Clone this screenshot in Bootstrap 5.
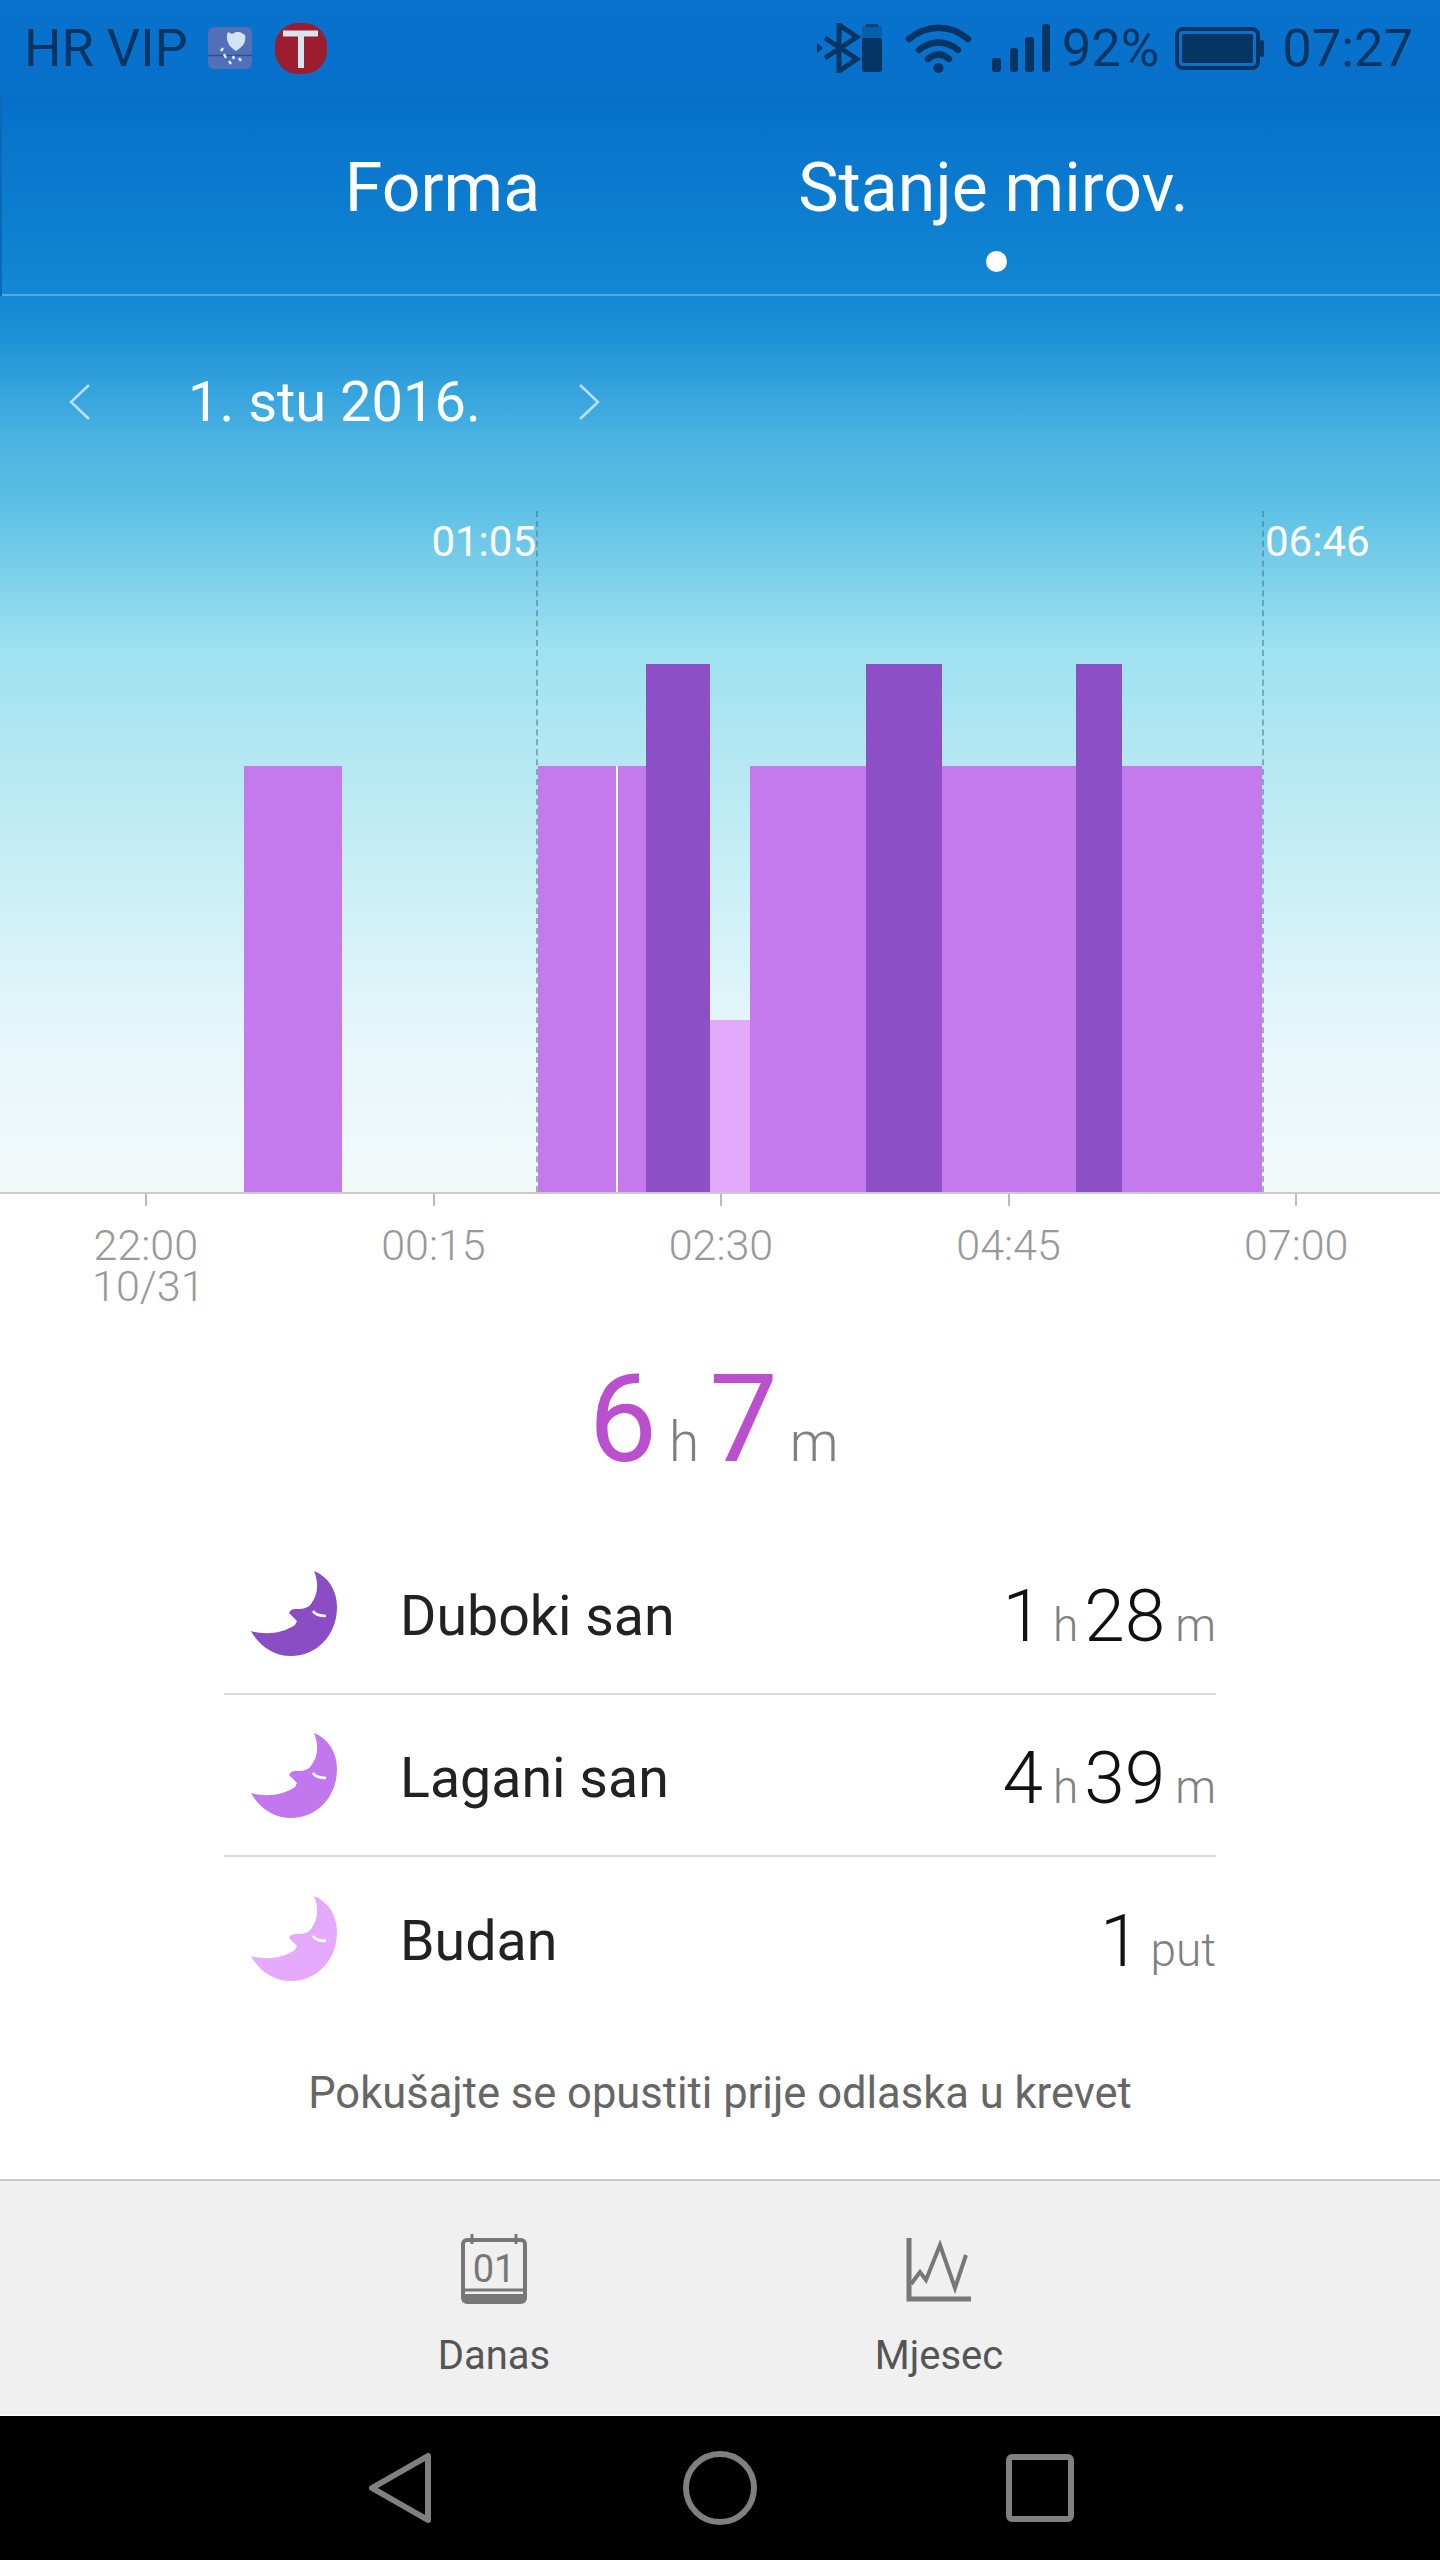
<!DOCTYPE html>
<html lang="hr">
<head>
  <meta charset="UTF-8">
  <meta name="viewport" content="width=device-width, initial-scale=1.0">
  <title>Stanje mirovanja</title>
  <link href="https://cdn.jsdelivr.net/npm/bootstrap@5.3.0/dist/css/bootstrap.min.css" rel="stylesheet">
  <style>
    body { background: #fff; font-family: Roboto, "Liberation Sans", sans-serif; }
    .phone { width: 1440px; height: 2560px; overflow: hidden; }

    /* plavi gornji dio */
    .sky {
      height: 1194px;
      border-bottom: 2px solid #c8cccc;
      background: linear-gradient(180deg, #0972cd 0, #0670c9 100px, #1287d4 290px, #1f93d7 340px, #4bb3e2 440px, #5cc0e4 505px, #9fe2f0 650px, #b8e9f3 780px, #cdf0f6 900px, #e8f7fb 1050px, #f2f9f9 1192px);
    }
    .status-row { height: 96px; padding: 0 27px 0 24px; color: #063564; font-size: 52.500px; line-height: 60px; }
    .tab-row { height: 200px; padding-right: 6px; border-bottom: 2px solid rgba(255,255,255,.28); margin-left: 2px; box-shadow: -2px 0 0 #0a69b8; }
    .tab-row .nav-link { width: 551px; padding: 53px 0 0; text-align: center; color: #fff; font-size: 68px; line-height: 78px; }
    .tab-dot { width: 21px; height: 21px; border-radius: 50%; background: #fff; margin: 24px 0 0 268px; }
    .date-row { height: 212px; padding: 0 0 0 69px; gap: 98px; color: #fff; font-size: 56px; line-height: 66px; }
    .chart-area { height: 684px; }
    .seg-light { background: #e3aafc; }
    .seg-mid { background: #c479ec; }
    .seg-deep { background: #8c4fc5; }
    .seg-gap { background: #fff; }
    .mark-line { position: absolute; top: 3px; bottom: 0; width: 0; border-left: 2px dashed rgba(70,110,130,.5); }
    .mark-time { position: absolute; top: 9px; color: #fff; font-size: 42px; line-height: 50px; }

    /* os */
    .axis-row { height: 108px; padding-left: 2px; }
    .axis-cell { width: 288px; position: relative; text-align: center; color: #999; font-size: 43px; line-height: 40.5px; font-weight: 300; padding-top: 31px; }
    .axis-cell::before { content: ""; position: absolute; top: 0; left: 143px; width: 2px; height: 12px; background: #bbb; }
    .axis-date { display: block; margin-left: 5px; }

    .total-row { height: 231px; padding: 58px 13px 0 0; line-height: 120px; font-weight: 300; color: #808080; font-size: 55px; }
    .total-num { color: #bb50cf; font-size: 122px; font-weight: 400; }
    .total-row .unit-h { margin: 0 10px 0 12px; }
    .total-row .unit-m { margin-left: 12px; }

    .sleep-list { width: 992px; margin: 0 auto; }
    .sleep-list .list-group-item { height: 162px; padding: 0 0 0 27px; border-color: #d9d9d9; border-width: 0 0 2px; background: transparent; color: #222; }
    .sleep-name { font-size: 55.500px; line-height: 64px; margin: 8px 0 0 62px; }
    .sleep-val { margin: 15px 0 0 auto; font-size: 73px; line-height: 80px; font-weight: 350; color: #111; }
    .sleep-unit { font-size: 46px; font-weight: 300; color: #808080; margin: 0 6px 0 10px; }
    .sleep-unit:last-child { margin-right: 0; }
    .tip-text { height: 160px; padding-top: 50px; text-align: center; font-size: 43.500px; line-height: 50px; color: #666; }

    .bottom-tabs { height: 237px; background: #f0f0f0; border-top: 2px solid #c9c9c9; border-bottom: 2px solid #fafafa; padding: 53px 7px 0 0; }
    .bottom-tab { width: 445px; text-align: center; color: #555; font-size: 40px; line-height: 48px; }
    .bottom-tab svg { display: block; margin: 0 auto; }
    .bottom-tab div { margin-top: 28px; }

    .sys-nav { height: 144px; background: #000; }
    .sys-nav > div { width: 320px; }
  </style>
</head>
<body>
<div class="phone d-flex flex-column">

  <!--Parte superior-->
  <div class="sky d-flex flex-column">
    <div class="status-row d-flex align-items-center">
      <span>HR VIP</span>
      <svg style="margin-left:20px" width="44" height="42" viewBox="0 0 44 42">
        <rect width="44" height="42" rx="6" fill="#5170b8"/>
        <path d="M20 5l4 2 4-2 4 0 5 3c2 8-4 13-9 16-5-3-10-8-9-16z" fill="#d3e3f6"/>
        <path d="M0 28.500h44" stroke="#2f4c92" stroke-width="1.500"/>
        <path d="M15 21l-2 3M16 27l2 4M21 34l2 3M25 29l1 3M31 31l2 3" stroke="#dbe8f8" stroke-width="2.500"/>
      </svg>
      <svg style="margin-left:23px" width="52" height="51" viewBox="0 0 52 51">
        <rect width="52" height="51" rx="23" fill="#9c1c30"/>
        <path d="M8 10.500h35M26 10v35" fill="none" stroke="#d8e4ee" stroke-width="6"/>
      </svg>
      <svg class="ms-auto" width="44" height="50" viewBox="0 0 44 50">
        <path d="M8 15l32 21-18 12V2l18 12L8 35" fill="none" stroke="#063564" stroke-width="5"/>
        <path d="M0 20l6 5-6 5z" fill="#063564"/>
      </svg>
      <svg style="margin-left:1px" width="20" height="48" viewBox="0 0 20 48">
        <rect x="0" y="1" width="20" height="47" rx="3" fill="#063564" fill-opacity=".3"/>
        <rect x="4" y="0" width="12" height="3" fill="#063564" fill-opacity=".7"/>
        <rect x="0" y="14" width="20" height="34" rx="3" fill="#063564"/>
      </svg>
      <svg style="margin-left:23px" width="67" height="49" viewBox="0 0 67 49">
        <path d="M4 15c18-15 41-15 59 0M14 26c12-10 27-10 39 0M23 35c7-6 14-6 21 0" fill="none" stroke="#063564" stroke-width="6.500" stroke-linecap="round"/>
        <circle cx="33.500" cy="44" r="5" fill="#063564"/>
      </svg>
      <svg style="margin-left:20px" width="58" height="48" viewBox="0 0 58 48">
        <rect x="0" y="34" width="9" height="14" rx="3" fill="#063564"/>
        <rect x="18" y="24" width="8" height="24" rx="3" fill="#063564"/>
        <rect x="33" y="13" width="9" height="35" rx="3" fill="#063564"/>
        <rect x="50" y="0" width="8" height="48" rx="3" fill="#063564"/>
      </svg>
      <span style="margin-left:12px">92%</span>
      <svg style="margin-left:16px" width="89" height="43" viewBox="0 0 89 43">
        <rect x="2" y="2" width="81" height="39" rx="6" fill="none" stroke="#063564" stroke-width="4"/>
        <rect x="7" y="7" width="71" height="29" rx="2" fill="#063564"/>
        <rect x="85" y="13" width="4" height="17" rx="2" fill="#063564"/>
      </svg>
      <span style="margin-left:18px">07:27</span>
    </div>

    <ul class="nav tab-row justify-content-center">
      <li class="nav-item"><a class="nav-link" href="#">Forma</a></li>
      <li class="nav-item"><a class="nav-link active" href="#">Stanje mirov.<div class="tab-dot"></div></a></li>
    </ul>

    <div class="date-row d-flex align-items-center">
      <svg width="21" height="36" viewBox="0 0 21 36"><path d="M20 1L2 18l18 17" fill="none" stroke="#fff" stroke-opacity=".65" stroke-width="2.500"/></svg>
      <span>1. stu 2016.</span>
      <svg width="21" height="36" viewBox="0 0 21 36"><path d="M1 1l18 17L1 35" fill="none" stroke="#fff" stroke-opacity=".65" stroke-width="2.500"/></svg>
    </div>

    <!--Grafico-->
    <div class="chart-area position-relative d-flex align-items-end">
      <div style="width:244px"></div>
      <div class="seg-mid" style="width:98px;height:426px"></div>
      <div style="width:196px"></div>
      <div class="seg-mid" style="width:78px;height:426px"></div>
      <div class="seg-gap" style="width:2px;height:426px"></div>
      <div class="seg-mid" style="width:28px;height:426px"></div>
      <div class="seg-deep" style="width:64px;height:528px"></div>
      <div class="seg-light" style="width:40px;height:172px"></div>
      <div class="seg-mid" style="width:116px;height:426px"></div>
      <div class="seg-deep" style="width:76px;height:528px"></div>
      <div class="seg-mid" style="width:134px;height:426px"></div>
      <div class="seg-deep" style="width:46px;height:528px"></div>
      <div class="seg-mid" style="width:140px;height:426px"></div>
      <div class="mark-line" style="left:536px"></div>
      <div class="mark-line" style="left:1262px"></div>
      <div class="mark-time" style="right:904px">01:05</div>
      <div class="mark-time" style="left:1265px">06:46</div>
    </div>
  </div>

  <div class="axis-row d-flex">
    <div class="axis-cell">22:00<span class="axis-date">10/31</span></div>
    <div class="axis-cell">00:15</div>
    <div class="axis-cell">02:30</div>
    <div class="axis-cell">04:45</div>
    <div class="axis-cell">07:00</div>
  </div>

  <!--Resumen-->
  <div class="total-row text-center">
    <span class="total-num">6</span><span class="unit-h">h</span><span class="total-num">7</span><span class="unit-m">m</span>
  </div>

  <ul class="list-group list-group-flush sleep-list">
    <li class="list-group-item d-flex align-items-center">
      <svg width="87" height="85" viewBox="22 12 87 85"><path d="M85 12C100 18 108 32 108 48C108 76 88 97 62 97C45 97 30 87 22 72C36 76 52 75 66 66L68 62L60 54Q62 50 66 50C72 50 78 50 82 45C89 36 90 24 85 12Z" fill="#8a4dc4"/><path d="M84 52Q87 57 97 57" fill="none" stroke="#fff" stroke-width="2.500"/></svg>
      <span class="sleep-name">Duboki san</span>
      <span class="sleep-val">1<span class="sleep-unit">h</span>28<span class="sleep-unit">m</span></span>
    </li>
    <li class="list-group-item d-flex align-items-center">
      <svg width="87" height="85" viewBox="22 12 87 85"><path d="M85 12C100 18 108 32 108 48C108 76 88 97 62 97C45 97 30 87 22 72C36 76 52 75 66 66L68 62L60 54Q62 50 66 50C72 50 78 50 82 45C89 36 90 24 85 12Z" fill="#c377ec"/><path d="M84 52Q87 57 97 57" fill="none" stroke="#fff" stroke-width="2.500"/></svg>
      <span class="sleep-name">Lagani san</span>
      <span class="sleep-val">4<span class="sleep-unit">h</span>39<span class="sleep-unit">m</span></span>
    </li>
    <li class="list-group-item d-flex align-items-center">
      <svg width="87" height="85" viewBox="22 12 87 85"><path d="M85 12C100 18 108 32 108 48C108 76 88 97 62 97C45 97 30 87 22 72C36 76 52 75 66 66L68 62L60 54Q62 50 66 50C72 50 78 50 82 45C89 36 90 24 85 12Z" fill="#e5aafd"/><path d="M84 52Q87 57 97 57" fill="none" stroke="#fff" stroke-width="2.500"/></svg>
      <span class="sleep-name">Budan</span>
      <span class="sleep-val">1<span class="sleep-unit">put</span></span>
    </li>
  </ul>

  <div class="tip-text">Pokušajte se opustiti prije odlaska u krevet</div>

  <!--Pestañas inferiores-->
  <div class="bottom-tabs d-flex justify-content-center">
    <div class="bottom-tab">
      <svg width="66" height="70" viewBox="0 0 66 70">
        <path d="M11 0v10M55 0v10" stroke="#777" stroke-width="3"/>
        <rect x="2" y="6" width="62" height="62" rx="4" fill="none" stroke="#777" stroke-width="4"/>
        <path d="M2 56h62" stroke="#777" stroke-width="3"/>
        <path d="M2 63h62" stroke="#777" stroke-width="6"/>
        <text x="33" y="48" text-anchor="middle" font-family="Roboto, sans-serif" font-size="38" fill="#777">01</text>
      </svg>
      <div>Danas</div>
    </div>
    <div class="bottom-tab">
      <svg width="66" height="70" viewBox="0 0 66 70">
        <path d="M3 4v61h62" fill="none" stroke="#777" stroke-width="5"/>
        <path d="M5 50l9-12 6 8 14-35 15 43 11-33" fill="none" stroke="#777" stroke-width="4"/>
      </svg>
      <div>Mjesec</div>
    </div>
  </div>

  <!--Navegacion-->
  <div class="sys-nav d-flex justify-content-center align-items-center">
    <div class="d-flex justify-content-center">
      <svg width="64" height="72" viewBox="0 0 64 72"><path d="M60 4v64L4 36z" fill="none" stroke="#808080" stroke-width="6" stroke-linejoin="round"/></svg>
    </div>
    <div class="d-flex justify-content-center">
      <svg width="74" height="74" viewBox="0 0 74 74"><circle cx="37" cy="37" r="34" fill="none" stroke="#808080" stroke-width="6"/></svg>
    </div>
    <div class="d-flex justify-content-center">
      <svg width="68" height="68" viewBox="0 0 68 68"><rect x="3" y="3" width="62" height="62" rx="3" fill="none" stroke="#808080" stroke-width="6"/></svg>
    </div>
  </div>
</div>

<script src="https://cdn.jsdelivr.net/npm/bootstrap@5.3.0/dist/js/bootstrap.bundle.min.js"></script>
</body>
</html>
